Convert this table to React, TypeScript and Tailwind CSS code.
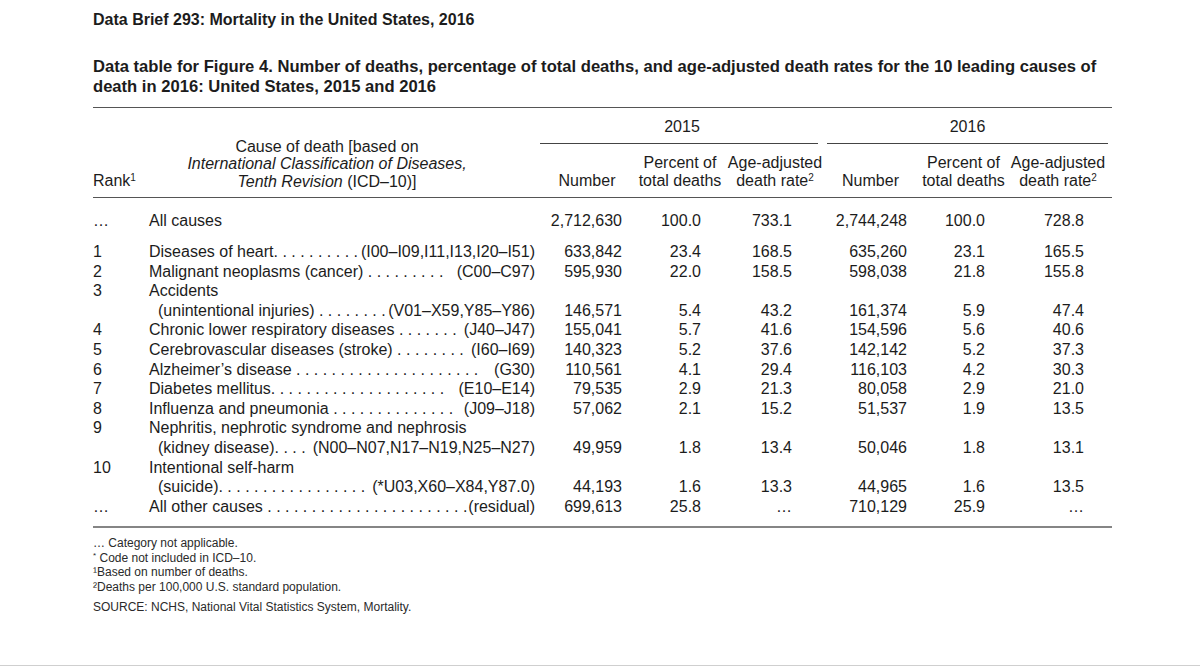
import React from 'react';

type Row = {
  rank: string;
  head?: string;
  name: string;
  code: string;
  v: string[];
};

// leader dots are written out as in the printed table
const rows: Row[] = [
  { rank: '1', name: 'Diseases of heart. . . . . . . . . .', code: '(I00–I09,I11,I13,I20–I51)', v: ['633,842', '23.4', '168.5', '635,260', '23.1', '165.5'] },
  { rank: '2', name: 'Malignant neoplasms (cancer) . . . . . . . . . ', code: '(C00–C97)', v: ['595,930', '22.0', '158.5', '598,038', '21.8', '155.8'] },
  { rank: '3', head: 'Accidents', name: '(unintentional injuries) . . . . . . . .', code: '(V01–X59,Y85–Y86)', v: ['146,571', '5.4', '43.2', '161,374', '5.9', '47.4'] },
  { rank: '4', name: 'Chronic lower respiratory diseases . . . . . . . ', code: '(J40–J47)', v: ['155,041', '5.7', '41.6', '154,596', '5.6', '40.6'] },
  { rank: '5', name: 'Cerebrovascular diseases (stroke) . . . . . . . .', code: '(I60–I69)', v: ['140,323', '5.2', '37.6', '142,142', '5.2', '37.3'] },
  { rank: '6', name: 'Alzheimer’s disease . . . . . . . . . . . . . . . . . . . . . ', code: '(G30)', v: ['110,561', '4.1', '29.4', '116,103', '4.2', '30.3'] },
  { rank: '7', name: 'Diabetes mellitus. . . . . . . . . . . . . . . . . . . . ', code: '(E10–E14)', v: ['79,535', '2.9', '21.3', '80,058', '2.9', '21.0'] },
  { rank: '8', name: 'Influenza and pneumonia . . . . . . . . . . . . . . ', code: '(J09–J18)', v: ['57,062', '2.1', '15.2', '51,537', '1.9', '13.5'] },
  { rank: '9', head: 'Nephritis, nephrotic syndrome and nephrosis', name: '(kidney disease). . . . ', code: '(N00–N07,N17–N19,N25–N27)', v: ['49,959', '1.8', '13.4', '50,046', '1.8', '13.1'] },
  { rank: '10', head: 'Intentional self-harm', name: '(suicide). . . . . . . . . . . . . . . . .', code: '(*U03,X60–X84,Y87.0)', v: ['44,193', '1.6', '13.3', '44,965', '1.6', '13.5'] },
  { rank: '…', name: 'All other causes . . . . . . . . . . . . . . . . . . . . . . .', code: '(residual)', v: ['699,613', '25.8', '…', '710,129', '25.9', '…'] },
];

const cols = 'grid grid-cols-[56px_391px_94px_92px_98px_93px_93px_102px]';
// right padding of the figures in each numeric column
const valPad = ['pr-[12px]', 'pr-[25px]', 'pr-[32px]', 'pr-[10px]', 'pr-[25px]', 'pr-[28px]'];

function Values({ v }: { v: string[] }) {
  return (
    <>
      {v.map((x, i) => (
        <div key={i} className={`text-right ${valPad[i]}`}>
          {x}
        </div>
      ))}
    </>
  );
}

function Cause({ name, code, indent }: { name: string; code: string; indent?: boolean }) {
  return (
    <div className={`flex justify-between whitespace-pre pr-[5px] ${indent ? 'pl-[9px]' : ''}`}>
      <span>{name}</span>
      <span>{code}</span>
    </div>
  );
}

export default function App() {
  return (
    <div
      className="h-[666px] w-full border-b border-[#cfcfcf] bg-white text-[#1c1c1c]"
      style={{ fontFamily: '"Liberation Sans", Arial, sans-serif' }}
    >
      <div className="ml-[93px] w-[1019px]">
        {/* Titles */}
        <div className="pt-[10px] text-[16px] font-bold leading-[20px]">
          Data Brief 293: Mortality in the United States, 2016
        </div>
        <div className="mt-[27px] text-[16.6px] font-bold leading-[20px]">
          Data table for Figure 4. Number of deaths, percentage of total deaths, and age-adjusted death rates for the 10 leading causes of
          <br />
          death in 2016: United States, 2015 and 2016
        </div>
        <div className="mt-[10px] h-px bg-[#555]"></div>

        {/* Table header */}
        <div className={`${cols} border-b border-[#555] text-[16px]`}>
          <div className="col-start-1 row-span-2 row-start-1 self-end pb-[8px] leading-[17.5px]">
            Rank<sup className="text-[10px]">1</sup>
          </div>
          <div className="col-start-2 row-span-2 row-start-1 self-end pb-[7px] pr-[35px] text-center leading-[17.5px]">
            <div>Cause of death [based on</div>
            <div className="italic">International Classification of Diseases,</div>
            <div>
              <span className="italic">Tenth Revision</span> (ICD–10)]
            </div>
          </div>
          <div className="col-span-3 col-start-3 row-start-1 pt-[9px]">
            <div className="mr-[6px] border-b border-[#444] pb-[6px] pl-[6px] text-center leading-[20px]">2015</div>
          </div>
          <div className="col-span-3 col-start-6 row-start-1 pt-[9px]">
            <div className="ml-[3px] mr-[4px] border-b border-[#444] pb-[6px] text-center leading-[20px]">2016</div>
          </div>

          {['2015', '2016'].map((y, k) => (
            <React.Fragment key={y}>
              <div className={`row-start-2 self-end pb-[8px] text-center leading-[17.5px] ${k === 0 ? 'col-start-3' : 'col-start-6'}`}>
                Number
              </div>
              <div className={`row-start-2 self-end pb-[8px] pt-[10px] text-center leading-[17.5px] ${k === 0 ? 'col-start-4' : 'col-start-7'}`}>
                <div>Percent of</div>
                <div>total deaths</div>
              </div>
              <div className={`row-start-2 self-end pb-[8px] pt-[10px] text-center leading-[17.5px] ${k === 0 ? 'col-start-5' : 'col-start-8 pr-[6px]'}`}>
                <div>Age-adjusted</div>
                <div>
                  death rate<sup className="text-[10px]">2</sup>
                </div>
              </div>
            </React.Fragment>
          ))}
        </div>

        {/* Table body */}
        <div className="pb-[9.6px] pt-[13px] text-[16px] leading-[19.6px]">
          <div className={cols}>
            <div>…</div>
            <div>All causes</div>
            <Values v={['2,712,630', '100.0', '733.1', '2,744,248', '100.0', '728.8']} />
          </div>
          <div className="mt-[11.4px]">
            {rows.map((r) => (
              <React.Fragment key={r.rank + r.code}>
                {r.head ? (
                  <>
                    <div className={cols}>
                      <div>{r.rank}</div>
                      <div>{r.head}</div>
                    </div>
                    <div className={cols}>
                      <div></div>
                      <Cause name={r.name} code={r.code} indent />
                      <Values v={r.v} />
                    </div>
                  </>
                ) : (
                  <div className={cols}>
                    <div>{r.rank}</div>
                    <Cause name={r.name} code={r.code} />
                    <Values v={r.v} />
                  </div>
                )}
              </React.Fragment>
            ))}
          </div>
        </div>
        <div className="h-[2.5px] bg-[#858585]"></div>

        {/* Footnotes */}
        <div className="pt-[8px] text-[12px] leading-[14.5px] text-[#2a2a2a]">
          <div>… Category not applicable.</div>
          <div>
            <sup className="text-[8px]">*</sup> Code not included in ICD–10.
          </div>
          <div>¹Based on number of deaths.</div>
          <div>²Deaths per 100,000 U.S. standard population.</div>
          <div className="mt-[6px]">SOURCE: NCHS, National Vital Statistics System, Mortality.</div>
        </div>
      </div>
    </div>
  );
}
